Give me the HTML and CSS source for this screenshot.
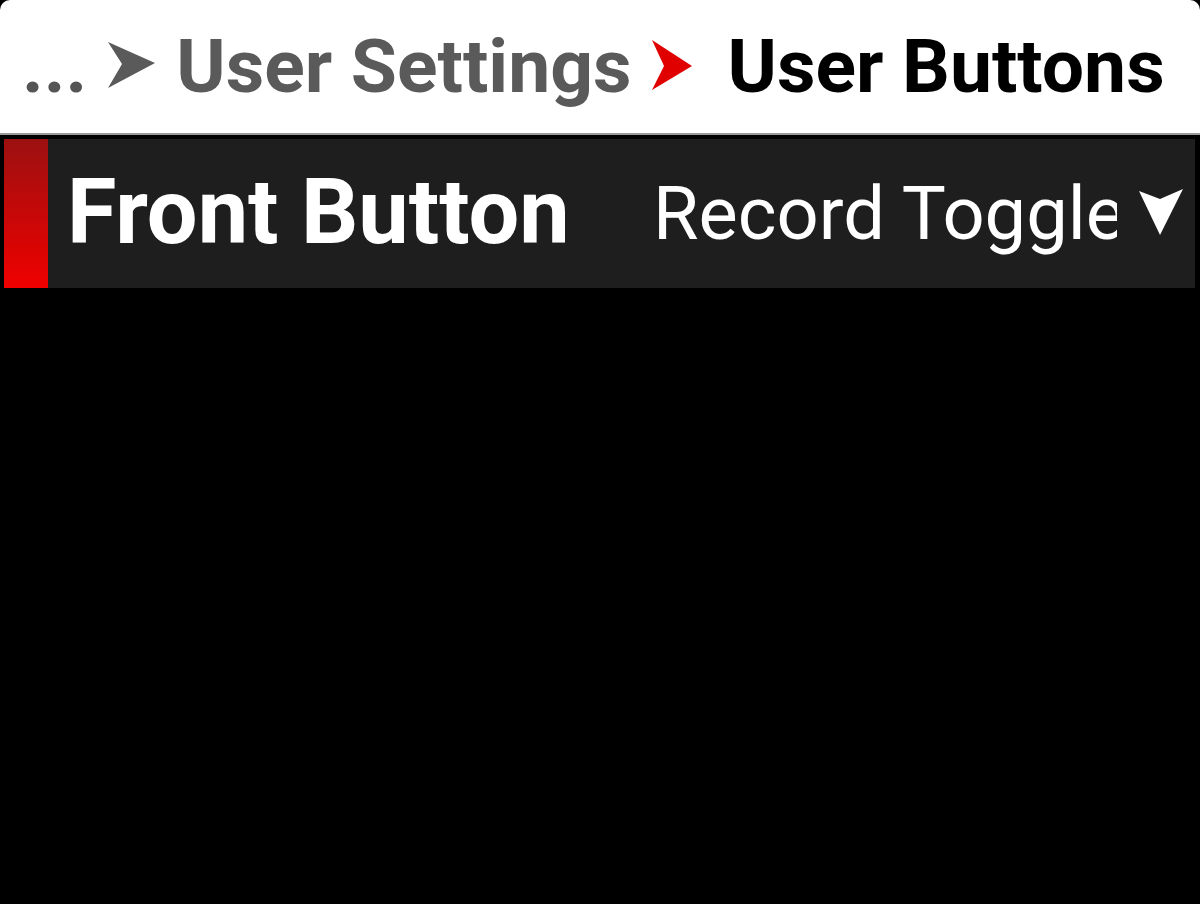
FILE: index.html
```html
<!DOCTYPE html>
<html>
<head>
<meta charset="utf-8">
<link rel="stylesheet" href="styles.css">
</head>
<body>
<div class="screen">
  <header class="crumbs">
    <span class="dots">...</span>
    <svg class="sep sep-gray" width="47" height="46" viewBox="0 0 47 46"><polygon points="0,0 47,21 0,46 14,22" fill="#5a5a5a"/></svg>
    <span class="crumb crumb-gray">User Settings</span>
    <svg class="sep sep-red" width="40" height="50" viewBox="0 0 40 50"><polygon points="0,0 40,26 0,50 12,26" fill="#e00000"/></svg>
    <span class="crumb crumb-current">User Buttons</span>
  </header>
  <div class="rule"></div>
  <div class="row">
    <div class="marker"></div>
    <div class="label">Front Button</div>
    <div class="value">
      <span class="value-text">Record Toggle</span>
      <svg class="caret" width="44" height="46" viewBox="0 0 44 46"><polygon points="0,2 21,10 44,0 21,46" fill="#ffffff"/></svg>
    </div>
  </div>
</div>
</body>
</html>
```
FILE: styles.css
```css
html, body {
  margin: 0;
  padding: 0;
  background: #000;
}
body {
  width: 1200px;
  height: 904px;
  overflow: hidden;
  font-family: Roboto, "Liberation Sans", sans-serif;
}
.screen {
  display: flex;
  flex-direction: column;
}
.crumbs {
  height: 133px;
  background: #fff;
  border-radius: 10px 10px 0 0;
  display: flex;
  align-items: center;
  padding-left: 22px;
  box-sizing: border-box;
  white-space: nowrap;
  font-weight: 700;
  font-size: 75px;
  line-height: 1;
}
.dots {
  color: #555;
}
.sep-gray {
  margin-left: 21px;
  margin-right: 21px;
  margin-top: -4px;
}
.sep-red {
  margin-left: 20px;
  margin-right: 36px;
  margin-top: -4px;
}
.crumb-gray { color: #5a5a5a; }
.crumb-current { color: #000; }
.rule {
  height: 2px;
  background: #9a9a9a;
  margin-bottom: 4px;
}
.row {
  margin-left: 4px;
  width: 1191px;
  height: 149px;
  background: #1e1e1e;
  display: flex;
  align-items: center;
}
.marker {
  width: 44px;
  align-self: stretch;
  background: linear-gradient(#9c1010, #f00000);
}
.label {
  color: #fff;
  font-weight: 700;
  font-size: 90px;
  margin-left: 19px;
  margin-top: -2px;
  white-space: nowrap;
}
.value {
  margin-left: auto;
  display: flex;
  align-items: center;
  margin-right: 12px;
}
.value-text {
  color: #fff;
  font-size: 74px;
  width: 464px;
  overflow: hidden;
  white-space: nowrap;
}
.caret {
  margin-left: 22px;
  margin-top: -4px;
}
```
